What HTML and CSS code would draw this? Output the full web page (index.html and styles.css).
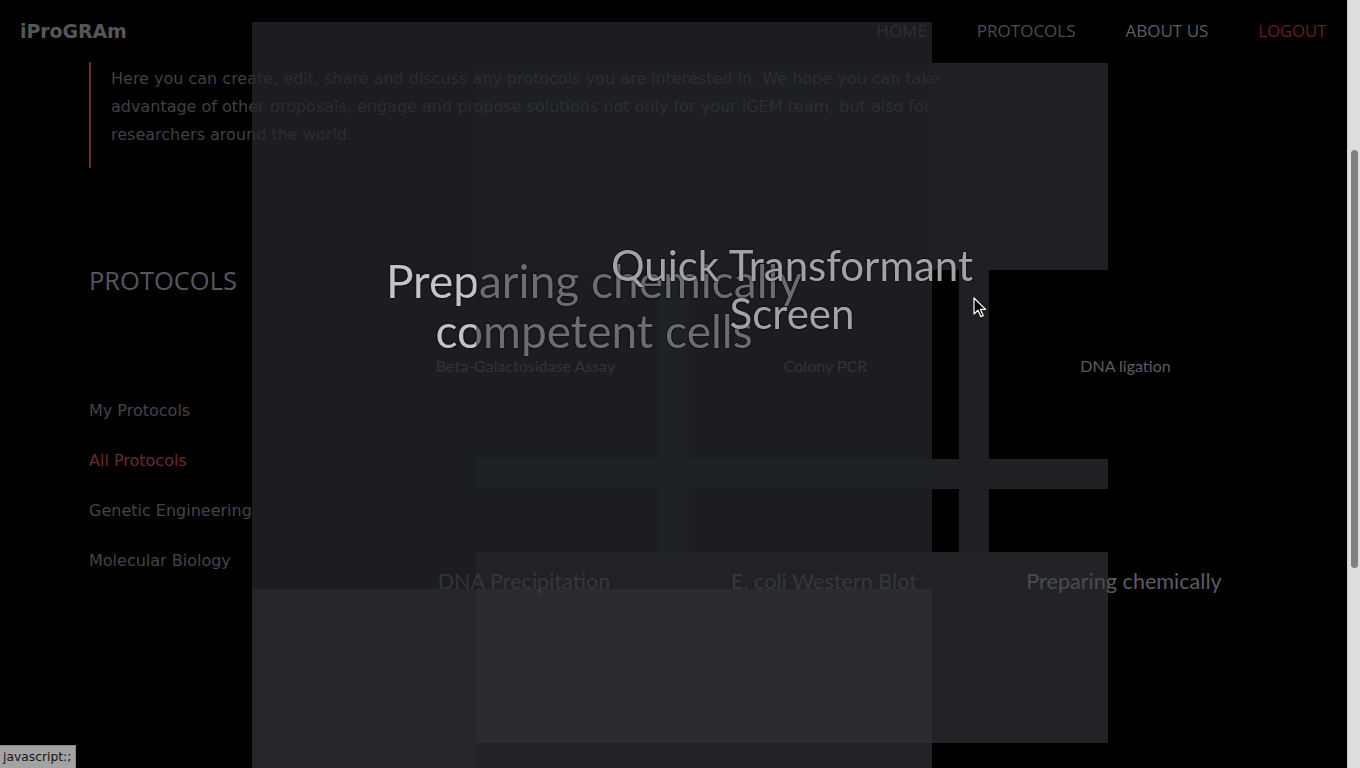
FILE: index.html
```html
<!DOCTYPE html>
<html lang="en">
<head>
<meta charset="utf-8">
<title>iProGRAm – Protocols</title>
<link rel="stylesheet" href="styles.css">
</head>
<body>
<div class="page">
  <header class="nav">
    <a class="brand" href="javascript:;">iProGRAm</a>
    <nav class="links">
      <a class="link" href="javascript:;">HOME</a>
      <a class="link" href="javascript:;">PROTOCOLS</a>
      <a class="link link-about" href="javascript:;">ABOUT US</a>
      <a class="link link-logout" href="javascript:;">LOGOUT</a>
    </nav>
  </header>

  <blockquote class="intro">Here you can create, edit, share and discuss any protocols you are interested in. We hope you can take advantage of other proposals, engage and propose solutions not only for your iGEM team, but also for researchers around the world.</blockquote>

  <section class="protocols">
    <aside class="sidebar">
      <h2 class="sidebar-title">PROTOCOLS</h2>
      <ul class="menu">
        <li class="menu-item">My Protocols</li>
        <li class="menu-item active">All Protocols</li>
        <li class="menu-item">Genetic Engineering</li>
        <li class="menu-item">Molecular Biology</li>
      </ul>
    </aside>
    <div class="grid">
      <div class="card card-small">Beta-Galactosidase Assay</div>
      <div class="card card-small">Colony PCR</div>
      <div class="card card-small">DNA ligation</div>
      <div class="card">DNA Precipitation</div>
      <div class="card">E. coli Western Blot</div>
      <div class="card">Preparing chemically</div>
    </div>
  </section>
</div>

<div class="overlays">
  <div class="ov ov-a1"></div>
  <div class="ov ov-a2-left"></div>
  <div class="ov ov-a2-mid"></div>
  <div class="ov ov-a2-bottom"></div>
  <div class="ov ov-b-top-left"></div>
  <div class="ov ov-b-top-right"></div>
  <div class="ov ov-strip1-a"></div>
  <div class="ov ov-strip1-b"></div>
  <div class="ov ov-strip2-a"></div>
  <div class="ov ov-strip2-b"></div>
  <div class="ov ov-band-left"></div>
  <div class="ov ov-band-right"></div>
  <div class="ov ov-b-bottom-left"></div>
  <div class="ov ov-b-bottom-right"></div>

  <div class="fly-title fly-title-1">Preparing chemically<br>competent cells</div>
  <div class="fly-title fly-title-2">Quick Transformant<br>Screen</div>
</div>

<svg class="cursor" width="14" height="22" viewBox="0 0 14 22">
  <path d="M1 1 L1 17 L5 13.2 L7.8 19.6 L10.2 18.6 L7.5 12.4 L12.6 12.4 Z" fill="#000" stroke="#fff" stroke-width="1.2" stroke-linejoin="round"/>
</svg>

<div class="status">javascript:;</div>
<div class="scrollbar"><div class="thumb"></div></div>
</body>
</html>
```

FILE: styles.css
```css
html, body {
  margin: 0;
  padding: 0;
  background: #000;
  overflow: hidden;
  height: 768px;
}

body {
  position: relative;
  font-family: "DejaVu Sans", sans-serif;
}

.page {
  width: 1347px;
}

a {
  text-decoration: none;
}

/* ---------- nav ---------- */
.nav {
  height: 62px;
  display: flex;
  align-items: center;
  justify-content: space-between;
  padding: 0 21px 1px 20px;
  box-sizing: border-box;
}

.brand {
  font-family: "DejaVu Sans", sans-serif;
  font-weight: bold;
  font-size: 19px;
  color: #55565b;
  letter-spacing: -0.1px;
}

.links {
  display: flex;
  gap: 50px;
}

.link {
  font-family: "Open Sans", sans-serif;
  font-size: 17px;
  color: #4b4c52;
}

.link-about {
  color: #5c5d66;
}

.link-logout {
  color: #6a1c20;
  letter-spacing: -0.3px;
}

/* ---------- intro ---------- */
.intro {
  margin: 0 0 0 89px;
  border-left: 2px solid #6b2a2e;
  padding: 3px 0 19px 20px;
  width: 850px;
  font-size: 16px;
  line-height: 28px;
  color: #404145;
}

/* ---------- protocols ---------- */
.protocols {
  display: flex;
  margin-top: 98px;
  padding-left: 89px;
}

.sidebar {
  width: 300px;
  flex: none;
}

.sidebar-title {
  margin: 0;
  font-family: "Open Sans", sans-serif;
  font-weight: normal;
  font-size: 25.5px;
  line-height: 29px;
  color: #56575d;
}

.menu {
  list-style: none;
  margin: 91px 0 0;
  padding: 0;
}

.menu-item {
  font-size: 16px;
  line-height: 50px;
  color: #434449;
}

.menu-item.active {
  color: #6a292d;
}

.grid {
  margin-top: 4px;
  display: grid;
  grid-template-columns: repeat(3, 270px);
  grid-auto-rows: 189px;
  gap: 30px;
}

.card {
  display: flex;
  align-items: center;
  justify-content: center;
  padding-bottom: 6px;
  font-family: Lato, sans-serif;
  font-size: 21.6px;
  color: #5b5c61;
  white-space: nowrap;
}

.card-small {
  font-size: 16px;
  padding: 1px 0 0 3px;
}

/* ---------- overlays (mid-animation panels) ---------- */
.overlays {
  position: absolute;
  left: 0;
  top: 0;
  width: 1360px;
  height: 768px;
  pointer-events: none;
}

.ov {
  position: absolute;
}

.ov-a1 { left: 252px; top: 22px; width: 680px; height: 567px; background: rgba(37, 38, 42, 0.76); }
.ov-a2-left { left: 252px; top: 589px; width: 224px; height: 179px; background: rgba(50, 51, 56, 0.76); }
.ov-a2-mid { left: 476px; top: 589px; width: 456px; height: 154px; background: rgba(57, 58, 63, 0.76); }
.ov-a2-bottom { left: 476px; top: 743px; width: 456px; height: 25px; background: rgba(45, 46, 50, 0.76); }

.ov-b-top-left { left: 476px; top: 63px; width: 456px; height: 207px; background: rgba(80, 110, 130, 0.04); }
.ov-b-top-right { left: 932px; top: 63px; width: 176px; height: 207px; background: rgba(37, 38, 41, 0.85); }
.ov-strip1-a { left: 659px; top: 270px; width: 30px; height: 189px; background: rgba(80, 110, 130, 0.05); }
.ov-strip1-b { left: 659px; top: 489px; width: 30px; height: 63px; background: rgba(80, 110, 130, 0.05); }
.ov-strip2-a { left: 959px; top: 270px; width: 30px; height: 189px; background: #1f2023; }
.ov-strip2-b { left: 959px; top: 489px; width: 30px; height: 63px; background: #1f2023; }
.ov-band-left { left: 476px; top: 459px; width: 456px; height: 30px; background: rgba(80, 110, 130, 0.05); }
.ov-band-right { left: 932px; top: 459px; width: 176px; height: 30px; background: #1f2023; }
.ov-b-bottom-left { left: 476px; top: 552px; width: 456px; height: 37px; background: rgba(255, 255, 255, 0.025); }
.ov-b-bottom-right { left: 932px; top: 552px; width: 176px; height: 191px; background: rgba(61, 62, 68, 0.56); }

.fly-title {
  position: absolute;
  width: 500px;
  text-align: center;
  white-space: nowrap;
  font-family: Lato, sans-serif;
  filter: drop-shadow(0 0 1px rgba(0, 0, 0, 0.9));
}

.fly-title-1 {
  left: 344px;
  top: 256px;
  font-size: 46px;
  line-height: 50px;
  background: linear-gradient(to right, #c4c4c6 132px, #6c6d71 132px);
  -webkit-background-clip: text;
  background-clip: text;
  color: transparent;
}

.fly-title-2 {
  left: 542px;
  top: 241px;
  font-size: 42px;
  line-height: 48px;
  color: #a2a3a7;
}

/* ---------- browser chrome bits ---------- */
.cursor {
  position: absolute;
  left: 973px;
  top: 297px;
}

.status {
  position: absolute;
  left: 0;
  bottom: 0;
  height: 22px;
  padding: 0 4px 0 3px;
  background: #a3a3a3;
  border-top: 1px solid #8c8c8c;
  border-right: 1px solid #8c8c8c;
  font-family: "DejaVu Sans", sans-serif;
  font-size: 12.3px;
  line-height: 22px;
  color: #151515;
}

.scrollbar {
  position: absolute;
  right: 0;
  top: 0;
  width: 13px;
  height: 768px;
  background: #dedede;
  border-left: 1px solid #cfcfcf;
  box-sizing: border-box;
}

.thumb {
  position: absolute;
  left: 3px;
  top: 150px;
  width: 7px;
  height: 418px;
  border-radius: 4px;
  background: #808080;
}
```
